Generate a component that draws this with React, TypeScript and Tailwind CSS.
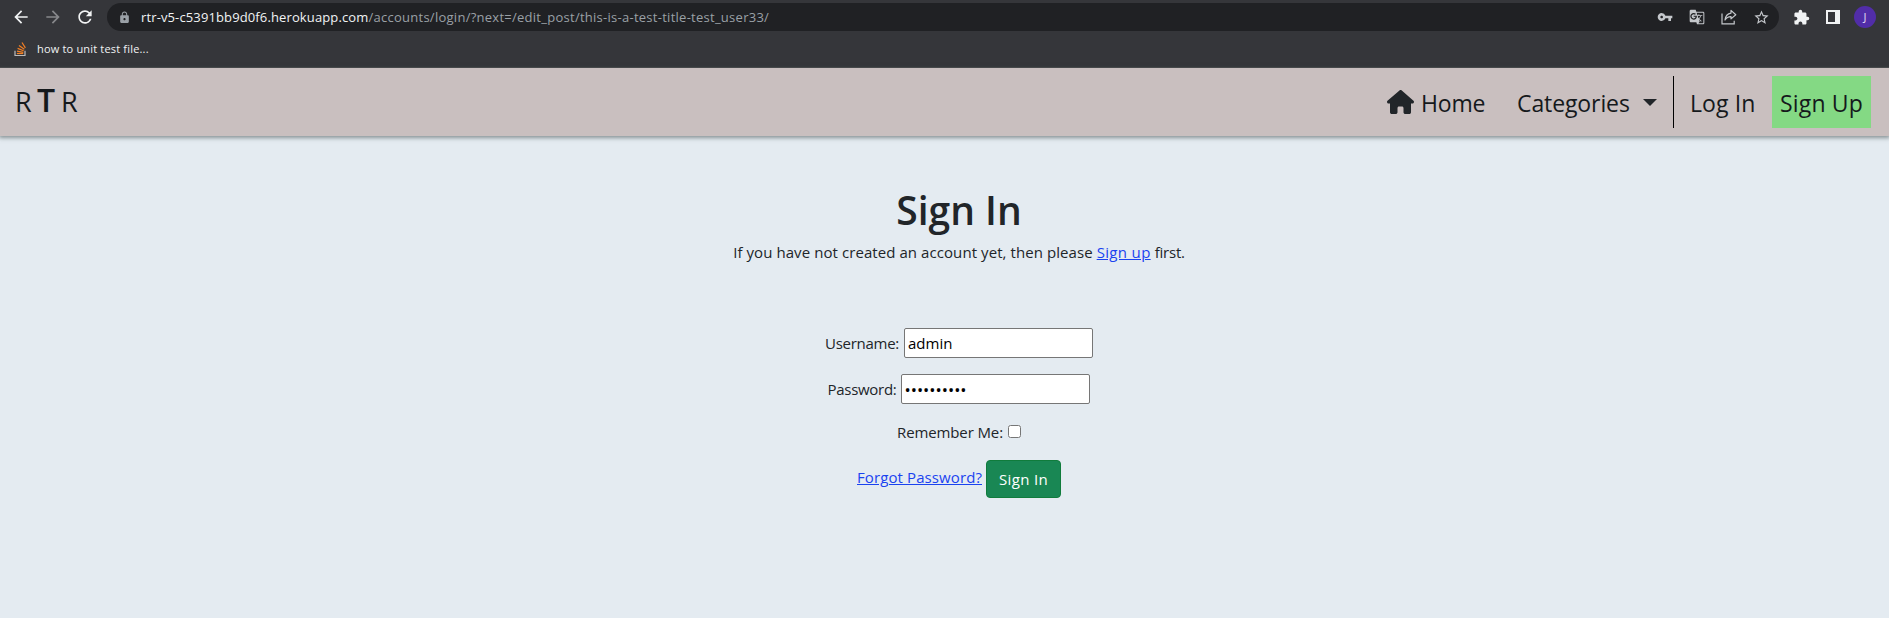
import type { ReactNode } from "react";
import { FaHouse } from "react-icons/fa6";
import {
  MdArrowBack,
  MdArrowForward,
  MdExtension,
  MdGTranslate,
  MdLock,
  MdRefresh,
  MdStarBorder,
  MdVpnKey,
} from "react-icons/md";

function ShareIcon() {
  return (
    <svg width="16" height="16" viewBox="0 0 16 16" fill="none" stroke="#c4c7cb" strokeWidth="1.2">
      <path d="M1 4.5v10.3h12.2v-3" />
      <path d="M10 1.4l4.8 4.3-4.8 4.2V7.6C7.500 7.500 5.500 8.600 4 11c.4-3.600 2.500-6.400 6-6.900z" strokeLinejoin="round" />
    </svg>
  );
}

function StackOverflowIcon() {
  return (
    <svg width="13" height="16" viewBox="0 0 13 16" fill="none">
      <path d="M1 9.800v4.700h10V9.800" stroke="#bcbbbb" strokeWidth="1.2" />
      <g stroke="#f48024" strokeWidth="1.200">
        <path d="M2.900 12.500h6.300" />
        <path d="M3 10.200l6.300 1.100" />
        <path d="M3.600 7.400l6 2.400" />
        <path d="M5 4.600l5.300 3.700" />
        <path d="M8 1.500l3.400 5.400" />
      </g>
    </svg>
  );
}

function SidePanelIcon() {
  return (
    <svg width="14" height="14" viewBox="0 0 14 14">
      <path fill="#f1f3f4" fillRule="evenodd" d="M0 0h14v14H0zM2 2v10h7V2z" />
    </svg>
  );
}

function BrowserChrome() {
  return (
    <header className="h-[68px] border-b border-[#4b4a4d] bg-[#35363a]">
      <div className="flex h-[34px] items-center">
        <div className="flex w-[107px] shrink-0 items-center gap-[12px] pl-[11px]">
          <MdArrowBack size={20} color="#f1f3f4" />
          <MdArrowForward size={20} color="#87888b" />
          <MdRefresh size={20} color="#f1f3f4" />
        </div>
        <div className="flex h-7 w-[1672px] items-center rounded-full bg-[#202124] pr-[9px] pl-[11px]">
          <MdLock size={13} color="#9aa0a6" />
          <div className="ml-[10px] flex-1 text-[13px] leading-5 whitespace-nowrap">
            <span className="tracking-[0.125px] text-[#f1f3f4]">rtr-v5-c5391bb9d0f6.herokuapp.com</span>
            <span className="tracking-[0.265px] text-[#9aa0a6]">
              /accounts/login/?next=/edit_post/this-is-a-test-title-test_user33/
            </span>
          </div>
          <div className="flex items-center gap-4 text-[#c4c7cb]">
            <MdVpnKey size={16} />
            <MdGTranslate size={16} />
            <ShareIcon />
            <MdStarBorder size={17} />
          </div>
        </div>
        <div className="ml-[14px] flex items-center">
          <MdExtension size={17} color="#f1f3f4" />
          <div className="ml-[16px]">
            <SidePanelIcon />
          </div>
          <div className="ml-[14px] flex size-[22px] items-center justify-center rounded-full bg-[#512da8] text-[11px] text-[#e4dcf5]">
            J
          </div>
        </div>
      </div>
      <div className="flex h-[30px] items-center pl-[14px]">
        <StackOverflowIcon />
        <span className="ml-[10px] text-[11px] leading-4 tracking-[0.18px] text-[#f1f3f4]">how to unit test file...</span>
      </div>
    </header>
  );
}

function Navbar() {
  return (
    <nav className="relative flex h-[68px] justify-between bg-[#c9bfbf] pl-[15px] text-[23px] text-[#15191c] shadow-[0_1px_4px_1px_rgba(60,75,75,0.55)]">
      <a href="#" className="flex items-baseline pt-[13px] text-[27px] leading-[38px]">
        <span className="w-[22px]">R</span>
        <span className="w-[24px] text-[32px] font-semibold">T</span>
        <span>R</span>
      </a>
      <div className="flex h-[60px] items-end pr-[18px] leading-[54px] whitespace-nowrap">
        <a href="#" className="flex h-[52px] w-[130px] items-center">
          <FaHouse size={24} className="w-[27px]" color="#212529" />
          <span className="ml-[7px] pt-[2px] tracking-[-0.2px]">Home</span>
        </a>
        <a href="#" className="flex h-[52px] w-[156px] items-center">
          <span className="w-[126px] pt-[2px] tracking-[-0.1px]">Categories</span>
          <svg width="14" height="7" viewBox="0 0 14 7">
            <path d="M0 0h14L7 7z" fill="#212529" />
          </svg>
        </a>
        <a href="#" className="h-[52px] w-[99px] border-l border-black pl-[16px] tracking-[0.1px]">Log In</a>
        <a href="#" className="h-[52px] w-[99px] bg-[#84d984] text-center tracking-[0.2px]">Sign Up</a>
      </div>
    </nav>
  );
}

function Row({ className, children }: { className: string; children: ReactNode }) {
  return <div className={`flex items-center justify-center ${className}`}>{children}</div>;
}

export default function App() {
  return (
    <div className="flex min-h-[618px] flex-col bg-[#e4ebf1] font-['Open_Sans',sans-serif]">
      <BrowserChrome />
      <Navbar />
      <main className="flex flex-col pl-[29px] text-[15px] leading-6 text-[#212529]">
        <h1 className="mt-[50px] text-center text-[39px] leading-[48px] font-semibold">Sign In</h1>
        <p className="mt-[6px] text-center tracking-[0.075px]">
          If you have not created an account yet, then please{" "}
          <a href="#" className="tracking-[0.337px] text-[#1a43f0] underline">Sign up</a>{" "}
          <span className="tracking-[-0.2px]">first.</span>
        </p>
        <form>
          <Row className="mt-[64px] h-[30px] gap-[5px]">
            <label htmlFor="username" className="tracking-[-0.269px]">Username:</label>
            <input
              id="username"
              type="text"
              defaultValue="admin"
              className="h-[30px] w-[189px] rounded-[2px] border border-[#767676] bg-white px-[3px] text-black"
            />
          </Row>
          <Row className="mt-4 h-[30px] gap-1 pr-px">
            <label htmlFor="password" className="tracking-[-0.285px]">Password:</label>
            <input
              id="password"
              type="password"
              defaultValue="adminadmin"
              className="h-[30px] w-[189px] rounded-[2px] border border-[#767676] bg-white px-[3px] text-[16.5px] text-black"
            />
          </Row>
          <Row className="mt-4 h-6 gap-[5px]">
            <label htmlFor="remember" className="tracking-[-0.113px]">Remember Me:</label>
            <input id="remember" type="checkbox" className="mb-[2px] size-[13px]" />
          </Row>
          <Row className="mt-4 h-[38px] gap-1">
            <a href="#" className="-mt-1 tracking-[0.1px] text-[#1a43f0] underline">Forgot Password?</a>
            <button
              type="button"
              className="h-[38px] w-[75px] rounded-[4px] border border-[#107c3c] bg-[#198754] tracking-[0.337px] text-white"
            >
              Sign In
            </button>
          </Row>
        </form>
      </main>
    </div>
  );
}
